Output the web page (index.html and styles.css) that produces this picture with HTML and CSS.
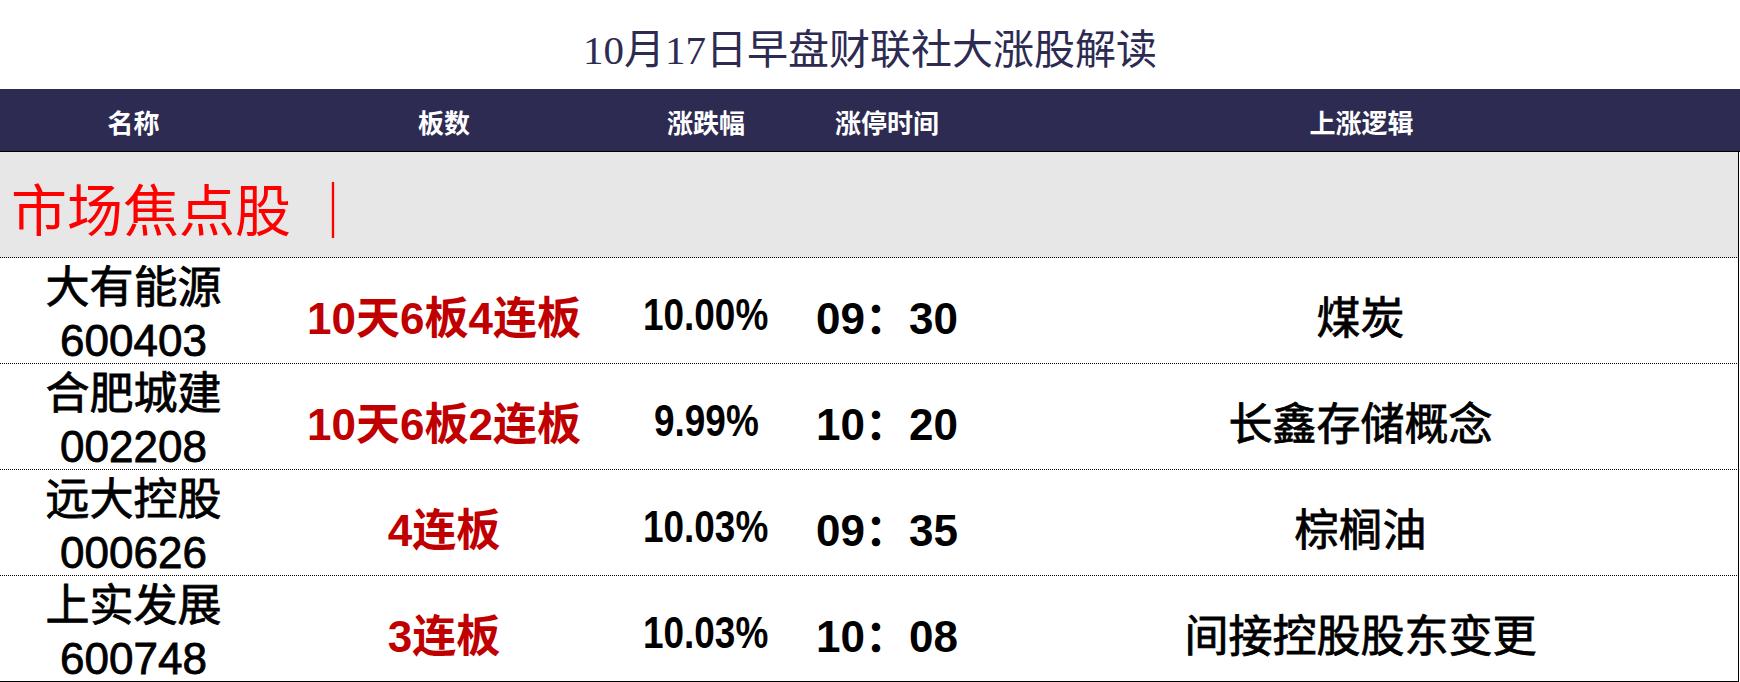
FILE: index.html
```html
<!DOCTYPE html>
<html lang="zh-CN">
<head>
<meta charset="utf-8">
<title>10月17日早盘财联社大涨股解读</title>
<link rel="stylesheet" href="styles.css">
</head>
<body>
<h1 class="title">10月17日早盘财联社大涨股解读</h1>
<div class="table">
  <div class="row head">
    <div class="cell">名称</div>
    <div class="cell">板数</div>
    <div class="cell">涨跌幅</div>
    <div class="cell">涨停时间</div>
    <div class="cell">上涨逻辑</div>
  </div>
  <div class="section">市场焦点股 ｜</div>
  <div class="row">
    <div class="cell name"><span>大有能源</span><span>600403</span></div>
    <div class="cell board">10天6板4连板</div>
    <div class="cell pct"><span class="narrow">10.00%</span></div>
    <div class="cell time">09：30</div>
    <div class="cell logic">煤炭</div>
  </div>
  <div class="row">
    <div class="cell name"><span>合肥城建</span><span>002208</span></div>
    <div class="cell board">10天6板2连板</div>
    <div class="cell pct"><span class="narrow">9.99%</span></div>
    <div class="cell time">10：20</div>
    <div class="cell logic">长鑫存储概念</div>
  </div>
  <div class="row">
    <div class="cell name"><span>远大控股</span><span>000626</span></div>
    <div class="cell board">4连板</div>
    <div class="cell pct"><span class="narrow">10.03%</span></div>
    <div class="cell time">09：35</div>
    <div class="cell logic">棕榈油</div>
  </div>
  <div class="row last">
    <div class="cell name"><span>上实发展</span><span>600748</span></div>
    <div class="cell board">3连板</div>
    <div class="cell pct"><span class="narrow">10.03%</span></div>
    <div class="cell time">10：08</div>
    <div class="cell logic">间接控股股东变更</div>
  </div>
</div>
</body>
</html>
```

FILE: styles.css
```css
* { box-sizing: border-box; }

html, body {
  margin: 0;
  padding: 0;
  background: #ffffff;
  width: 1740px;
  height: 682px;
  overflow: hidden;
}

body {
  font-family: "Liberation Sans", "Noto Sans CJK SC", sans-serif;
  color: #000000;
}

.title {
  margin: 0;
  height: 89px;
  display: flex;
  align-items: center;
  justify-content: center;
  padding-top: 2px;
  font-family: "Liberation Serif", "Noto Sans CJK SC", serif;
  font-weight: 400;
  font-size: 41px;
  color: #2d2b52;
}

.table {
  width: 1739px;
}

.row {
  display: grid;
  grid-template-columns: 267px 354px 170px 192px 1fr;
  height: 106px;
  border-bottom: 1px dotted #000000;
  border-right: 1px solid #000000;
}

.row.last {
  border-bottom: 1px solid #000000;
}

.row.head {
  height: 63px;
  background: #2d2b52;
  border-bottom: 1px solid #000000;
  border-right: none;
  width: 1740px;
}

.cell {
  display: flex;
  align-items: center;
  justify-content: center;
  white-space: nowrap;
}

.head .cell {
  color: #ffffff;
  font-size: 26px;
  font-weight: 700;
  padding-top: 2px;
}

.section {
  height: 106px;
  background: #e7e7e7;
  border-right: 1px solid #000000;
  border-bottom: 1px dotted #000000;
  display: flex;
  align-items: center;
  padding-left: 11px;
  padding-top: 4px;
  font-family: "Liberation Serif", "Noto Sans CJK SC", serif;
  font-size: 56px;
  color: #ff0000;
}

.name {
  flex-direction: column;
  font-size: 44px;
  line-height: 53px;
  font-weight: 400;
  -webkit-text-stroke: 0.8px #000000;
  padding-top: 3px;
}

.board {
  font-size: 44px;
  font-weight: 700;
  color: #c00000;
  padding-top: 4px;
}

.pct,
.time {
  font-size: 44px;
  font-weight: 700;
  padding-top: 4px;
}

.narrow {
  display: inline-block;
  transform: scaleX(0.84);
}

.logic {
  font-size: 44px;
  font-weight: 400;
  -webkit-text-stroke: 0.8px #000000;
  padding-top: 4px;
}
```
